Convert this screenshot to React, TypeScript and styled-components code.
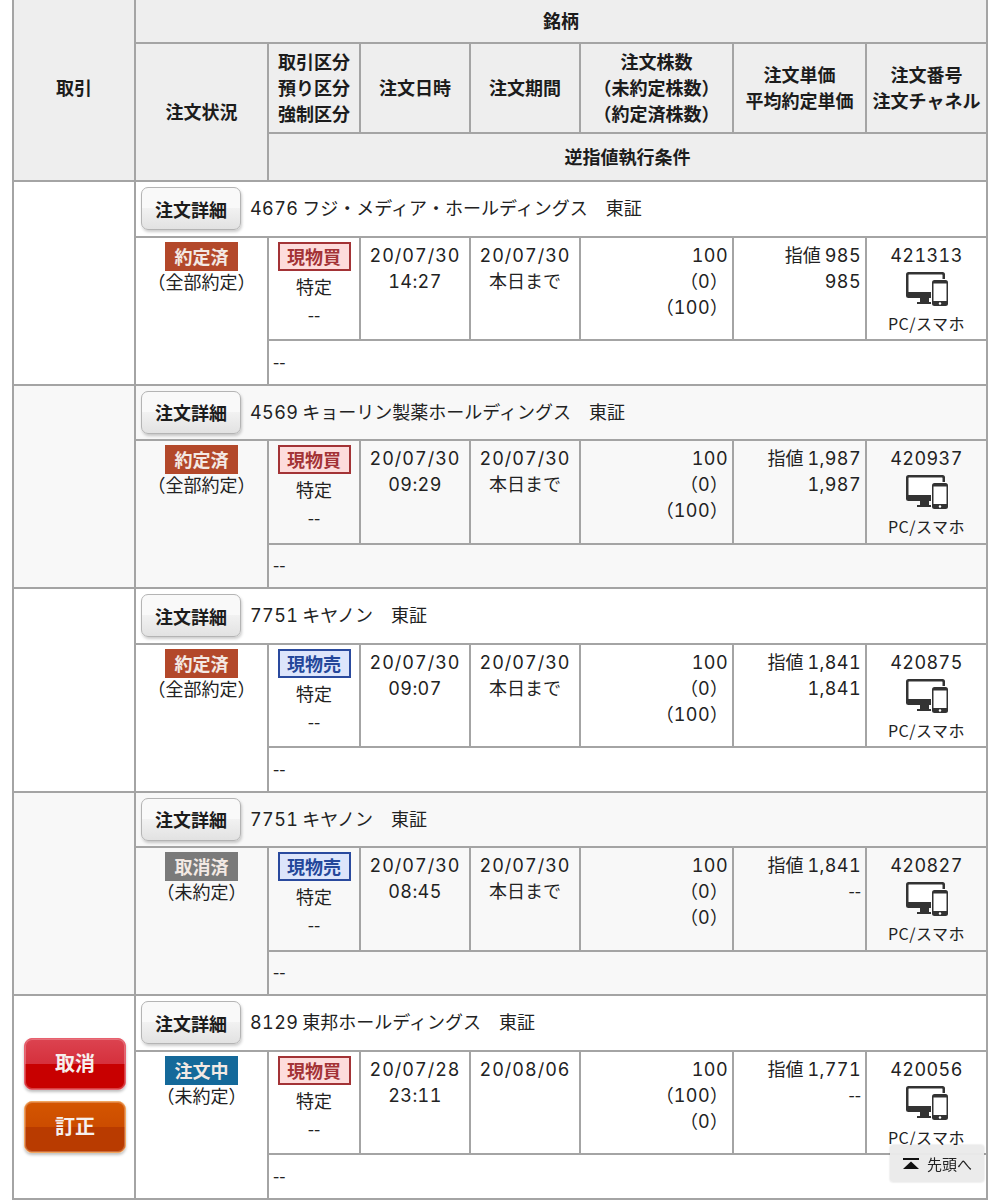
import React from 'react';
import styled, {createGlobalStyle} from 'styled-components';

interface Order {
  name: string;
  status: string;
  statusTone: 'done' | 'cancel' | 'open';
  statusNote: string;
  side: string;
  sideTone: 'buy' | 'sell';
  date: string;
  time: string;
  period: string;
  qty: string[];
  limit: string;
  average: string;
  orderNo: string;
  editable?: boolean;
}

const orders: Order[] = [
  {
    name: '4676 フジ・メディア・ホールディングス　東証',
    status: '約定済',
    statusTone: 'done',
    statusNote: '（全部約定）',
    side: '現物買',
    sideTone: 'buy',
    date: '20/07/30',
    time: '14:27',
    period: '20/07/30',
    qty: ['100', '（0）', '（100）'],
    limit: '985',
    average: '985',
    orderNo: '421313',
  },
  {
    name: '4569 キョーリン製薬ホールディングス　東証',
    status: '約定済',
    statusTone: 'done',
    statusNote: '（全部約定）',
    side: '現物買',
    sideTone: 'buy',
    date: '20/07/30',
    time: '09:29',
    period: '20/07/30',
    qty: ['100', '（0）', '（100）'],
    limit: '1,987',
    average: '1,987',
    orderNo: '420937',
  },
  {
    name: '7751 キヤノン　東証',
    status: '約定済',
    statusTone: 'done',
    statusNote: '（全部約定）',
    side: '現物売',
    sideTone: 'sell',
    date: '20/07/30',
    time: '09:07',
    period: '20/07/30',
    qty: ['100', '（0）', '（100）'],
    limit: '1,841',
    average: '1,841',
    orderNo: '420875',
  },
  {
    name: '7751 キヤノン　東証',
    status: '取消済',
    statusTone: 'cancel',
    statusNote: '（未約定）',
    side: '現物売',
    sideTone: 'sell',
    date: '20/07/30',
    time: '08:45',
    period: '20/07/30',
    qty: ['100', '（0）', '(0)'],
    limit: '1,841',
    average: '--',
    orderNo: '420827',
  },
  {
    name: '8129 東邦ホールディングス　東証',
    status: '注文中',
    statusTone: 'open',
    statusNote: '（未約定）',
    side: '現物買',
    sideTone: 'buy',
    date: '20/07/28',
    time: '23:11',
    period: '20/08/06',
    qty: ['100', '（100）', '（0）'],
    limit: '1,771',
    average: '--',
    orderNo: '420056',
    editable: true,
  },
];

const statusColors = {done: '#b3482a', cancel: '#7a7a7a', open: '#14699a'};

// Digits in the reference are wider than the kana, so runs of them get their own font
const Digits = ({text}: {text: string}) => (
  <>
    {text.split(/([0-9/:,]+)/).map((part, index) =>
      /^[0-9/:,]+$/.test(part) ? <Num key={index}>{part}</Num> : part,
    )}
  </>
);

const DeviceIcon = () => (
  <Device viewBox="0 0 44 34" aria-hidden="true">
    <rect x="0" y="0" width="39" height="26" rx="2.500" fill="#333" />
    <rect x="2.500" y="2.500" width="34" height="17.500" rx="0.500" fill="#fff" />
    <path fill="#333" d="M14 26h9v4h3v2H11v-2h3z" />
    <rect x="25" y="7" width="18" height="27" rx="3" fill="#fff" />
    <rect x="26" y="8" width="16" height="26" rx="2.500" fill="#333" />
    <rect x="27.500" y="11.500" width="13" height="17.500" fill="#fff" />
    <circle cx="34" cy="31.500" r="1.200" fill="#fff" />
  </Device>
);

const App = () => (
  <>
    <GlobalStyle />
    <Table>
      <colgroup>
        <col style={{width: 122}} />
        <col style={{width: 133}} />
        <col style={{width: 92}} />
        <col style={{width: 110}} />
        <col style={{width: 110}} />
        <col style={{width: 153}} />
        <col style={{width: 133}} />
        <col style={{width: 121}} />
      </colgroup>
      <thead>
        <HeadRow $height={43}>
          <TradeTh rowSpan={3}>取引</TradeTh>
          <Th colSpan={7}>銘柄</Th>
        </HeadRow>
        <HeadRow $height={90}>
          <Th rowSpan={2}>注文状況</Th>
          <Th>
            取引区分
            <br />
            預り区分
            <br />
            強制区分
          </Th>
          <Th>注文日時</Th>
          <Th>注文期間</Th>
          <Th>
            注文株数
            <br />
            （未約定株数）
            <br />
            （約定済株数）
          </Th>
          <Th>
            注文単価
            <br />
            平均約定単価
          </Th>
          <Th>
            注文番号
            <br />
            注文チャネル
          </Th>
        </HeadRow>
        <HeadRow $height={48}>
          <Th colSpan={6}>逆指値執行条件</Th>
        </HeadRow>
      </thead>
      {orders.map((order, index) => (
        <OrderBody key={index} $striped={index % 2 === 1}>
          <tr>
            <ActionCell rowSpan={3}>
              {order.editable && (
                <ActionStack>
                  <ActionButton $tone="cancel">取消</ActionButton>
                  <ActionButton $tone="edit">訂正</ActionButton>
                </ActionStack>
              )}
            </ActionCell>
            <NameCell colSpan={7}>
              <NameLine>
                <DetailButton>注文詳細</DetailButton>
                <span>
                  <Digits text={order.name} />
                </span>
              </NameLine>
            </NameCell>
          </tr>
          <DataRow>
            <CenterCell rowSpan={2}>
              <StatusBadge $tone={order.statusTone}>{order.status}</StatusBadge>
              <StatusNote>{order.statusNote}</StatusNote>
            </CenterCell>
            <CenterCell>
              <SideBadge $tone={order.sideTone}>{order.side}</SideBadge>
              <SideLine>特定</SideLine>
              <SideLine>--</SideLine>
            </CenterCell>
            <TextCell $align="center">
              <DateNum>{order.date}</DateNum>
              <br />
              <Digits text={order.time} />
            </TextCell>
            <TextCell $align="center">
              <DateNum>{order.period}</DateNum>
              {order.editable ? null : (
                <>
                  <br />
                  本日まで
                </>
              )}
            </TextCell>
            <TextCell $align="right">
              {order.qty.map((line, lineIndex) => (
                <div key={lineIndex}>
                  <Digits text={line.replace('(0)', '（0）')} />
                </div>
              ))}
            </TextCell>
            <TextCell $align="right">
              指値 <Digits text={order.limit} />
              <br />
              <Digits text={order.average} />
            </TextCell>
            <TextCell $align="center">
              <Digits text={order.orderNo} />
              <DeviceIcon />
              <ChannelLabel>PC/スマホ</ChannelLabel>
            </TextCell>
          </DataRow>
          <tr>
            <ConditionCell colSpan={6}>--</ConditionCell>
          </tr>
        </OrderBody>
      ))}
    </Table>
    <TopLink>
      <svg width="18" height="12" viewBox="0 0 18 12" aria-hidden="true">
        <rect x="1" y="0" width="16" height="2" fill="#111" />
        <path d="M9 3.500 17 11H1z" fill="#111" />
      </svg>
      先頭へ
    </TopLink>
  </>
);

export default App;

const GlobalStyle = createGlobalStyle`
  html, body {
    margin: 0;
    padding: 0;
    background: #fff;
  }
  body {
    font-family: "Noto Sans CJK JP", "Liberation Sans", sans-serif;
    font-size: 18px;
    color: #222;
    overflow: hidden;
  }
`;

const Table = styled.table`
  margin-left: 12px;
  width: 975px;
  table-layout: fixed;
  border-collapse: collapse;
  line-height: 26px;
  td, th {
    border: 2px solid #a4a4a4;
    padding: 0;
  }
  thead tr:first-child th {
    border-top: none;
  }
`;

const HeadRow = styled.tr<{$height: number}>`
  height: ${props => props.$height}px;
`;

const Th = styled.th`
  background: #eeeeee;
  color: #1c1c1c;
  font-weight: 700;
  text-align: center;
  vertical-align: middle;
  padding-bottom: 2px !important;
`;

const TradeTh = styled(Th)`
  padding-bottom: 6px !important;
`;

const OrderBody = styled.tbody<{$striped: boolean}>`
  background: ${props => (props.$striped ? '#f8f8f8' : '#fff')};
`;

const Num = styled.span`
  font-family: Inter, "Liberation Sans", sans-serif;
  font-variant-numeric: tabular-nums;
  letter-spacing: 0.4px;
  line-height: 0;
`;

const DateNum = styled(Num)`
  letter-spacing: 1px;
`;

const ActionCell = styled.td`
  vertical-align: top;
`;

const ActionStack = styled.div`
  display: flex;
  flex-direction: column;
  gap: 11px;
  padding: 42px 8px 0 10px;
`;

const ActionButton = styled.div<{$tone: 'cancel' | 'edit'}>`
  height: 52px;
  box-sizing: border-box;
  display: flex;
  align-items: center;
  justify-content: center;
  padding-bottom: 3px;
  border-radius: 8px;
  border: 1px solid ${props => (props.$tone === 'cancel' ? '#e8606e' : '#f2a65e')};
  background: ${props =>
    props.$tone === 'cancel'
      ? 'linear-gradient(#dc4350 0, #d5303c 50%, #c80000 50% 100%)'
      : 'linear-gradient(#d45600 0, #cc4c00 50%, #b93b00 50% 100%)'};
  box-shadow:
    inset 0 0 0 1px rgba(255, 255, 255, 0.25),
    0 2px 3px rgba(0, 0, 0, 0.25);
  color: #f6f0ee;
  font-size: 20px;
  font-weight: 700;
`;

const NameCell = styled.td`
  height: 53.500px;
  vertical-align: middle;
`;

const NameLine = styled.div`
  display: flex;
  align-items: center;
  gap: 9px;
  padding-left: 5px;
  white-space: pre;
  & > span {
    padding-bottom: 3px;
  }
`;

const DetailButton = styled.div`
  width: 100px;
  height: 43px;
  box-sizing: border-box;
  display: flex;
  align-items: center;
  justify-content: center;
  border: 1px solid #b4b4b4;
  border-radius: 7px;
  background: linear-gradient(#f9f9f9 0 48%, #f2f2f2 48%, #e2e2e2 100%);
  box-shadow: 1px 2px 3px rgba(0, 0, 0, 0.2);
  color: #1c1c1c;
  font-weight: 700;
`;

const DataRow = styled.tr`
  height: 103.500px;
`;

const CenterCell = styled.td`
  vertical-align: top;
  text-align: center;
  padding-top: 4px !important;
`;

const badge = `
  display: block;
  width: 73px;
  height: 29px;
  box-sizing: border-box;
  margin: 0 auto;
  font-weight: 700;
  text-align: center;
`;

const StatusBadge = styled.span<{$tone: Order['statusTone']}>`
  ${badge}
  line-height: 28px;
  background: ${props => statusColors[props.$tone]};
  color: #f3e9e4;
`;

const StatusNote = styled.div`
  line-height: 20px;
`;

const SideBadge = styled.span<{$tone: Order['sideTone']}>`
  ${badge}
  line-height: 24px;
  border: 2px solid ${props => (props.$tone === 'buy' ? '#a33336' : '#2a4a9e')};
  background: ${props => (props.$tone === 'buy' ? '#fddcdc' : '#dde5fb')};
  color: ${props => (props.$tone === 'buy' ? '#a33336' : '#24479a')};
`;

const SideLine = styled.div`
  line-height: 28px;
  &:first-of-type {
    margin-top: 1px;
  }
`;

const TextCell = styled.td<{$align: 'center' | 'right'}>`
  vertical-align: top;
  text-align: ${props => props.$align};
  padding: 3px ${props => (props.$align === 'right' ? '4px' : '0')} 0 0 !important;
`;

const Device = styled.svg`
  display: block;
  width: 44px;
  height: 34px;
  margin: 5px auto 0;
  transform: translateX(1px);
`;

const ChannelLabel = styled.div`
  font-size: 16px;
  line-height: 22px;
  margin-top: 6px;
  letter-spacing: 0.5px;
`;

const ConditionCell = styled.td`
  height: 39.500px;
  padding-left: 4px !important;
  padding-bottom: 3px !important;
  vertical-align: middle;
`;

const TopLink = styled.div`
  position: fixed;
  left: 890px;
  top: 1145px;
  width: 94px;
  height: 37px;
  display: flex;
  align-items: center;
  justify-content: center;
  gap: 7px;
  background: rgba(234, 234, 234, 0.96);
  border-radius: 3px;
  box-shadow: 0 0 2px rgba(0, 0, 0, 0.2);
  color: #222;
  font-size: 15px;
`;
